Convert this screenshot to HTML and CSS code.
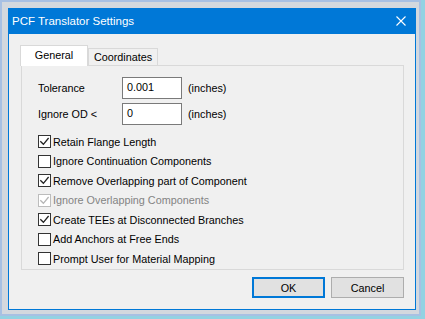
FILE: index.html
```html
<!DOCTYPE html>
<html lang="en">

<head>
	<meta charset="UTF-8">
	<title>PCF Translator Settings</title>

	<link rel="stylesheet" href="styles.css">
</head>

<body>
	<div class="desk">
		<div class="frame">
			<div class="dialog">
				<div class="titlebar">
					<span class="title">PCF Translator Settings</span>
					<svg class="close" width="10" height="10" viewBox="0 0 10 10">
						<path d="M0.5 0.5 L9.5 9.5 M9.5 0.5 L0.5 9.5" stroke="#fff" stroke-width="1.1" fill="none" />
					</svg>
				</div>

				<div class="client">
					<div class="tabs">
						<div class="tab active">General</div>
						<div class="tab">Coordinates</div>
					</div>

					<div class="panel">
						<div class="field">
							<span class="field-label">Tolerance</span>
							<span class="input">0.001</span>
							<span class="unit">(inches)</span>
						</div>
						<div class="field">
							<span class="field-label">Ignore OD &lt;</span>
							<span class="input">0</span>
							<span class="unit">(inches)</span>
						</div>

						<ul class="checks">
							<li class="check"><span class="box"><svg width="11" height="11" viewBox="0 0 11 11"><path d="M1.3 5.2 L4.4 8.3 L9.6 2" /></svg></span>Retain Flange Length</li>
							<li class="check"><span class="box empty"></span>Ignore Continuation Components</li>
							<li class="check"><span class="box"><svg width="11" height="11" viewBox="0 0 11 11"><path d="M1.3 5.2 L4.4 8.3 L9.6 2" /></svg></span>Remove Overlapping part of Component</li>
							<li class="check disabled"><span class="box"><svg width="11" height="11" viewBox="0 0 11 11"><path d="M1.3 5.2 L4.4 8.3 L9.6 2" /></svg></span>Ignore Overlapping Components</li>
							<li class="check"><span class="box"><svg width="11" height="11" viewBox="0 0 11 11"><path d="M1.3 5.2 L4.4 8.3 L9.6 2" /></svg></span>Create TEEs at Disconnected Branches</li>
							<li class="check"><span class="box empty"></span>Add Anchors at Free Ends</li>
							<li class="check"><span class="box empty"></span>Prompt User for Material Mapping</li>
						</ul>
					</div>

					<div class="buttons">
						<button class="btn default">OK</button>
						<button class="btn">Cancel</button>
					</div>
				</div>
			</div>
		</div>
	</div>
</body>

</html>
```

FILE: styles.css
```css
html {
	font-family: "Liberation Sans", Arial, sans-serif;
	font-size: 10.8px;
}

body {
	margin: 0;
	background-color: #93d2e2;
}

/* fondo de escritorio alrededor del dialogo */
.desk {
	width: 421px;
	height: 316px;
	padding: 2px 0 0 2px;
	box-sizing: border-box;
	background-color: #a7c0e3;
}

.frame {
	width: 417px;
	height: 312px;
	padding: 6px 0 0 6px;
	box-sizing: border-box;
	background-color: #d3d8de;
}

.dialog {
	width: 408px;
	height: 302px;
	box-sizing: border-box;
	border: 1px solid #0078d7;
	border-top: 0;
	background-color: #f0f0f0;
	color: #000;
}

.titlebar {
	display: flex;
	align-items: center;
	justify-content: space-between;
	height: 26px;
	background-color: #0078d7;
	color: #fff;
}

.title {
	padding-left: 3px;
	font-size: 11.5px;
}

.close {
	margin-right: 9px;
}

.client {
	padding: 11px 11px 0 11px;
}

.tabs {
	display: flex;
	align-items: flex-end;
	height: 20px;
}

.tab {
	box-sizing: border-box;
	height: 17px;
	width: 70px;
	margin-left: -1px;
	border: 1px solid #d9d9d9;
	border-bottom: 0;
	background-color: #f0f0f0;
	text-align: center;
	line-height: 16px;
}

.tab.active {
	position: relative;
	z-index: 1;
	width: 68px;
	height: 21px;
	margin-left: 0;
	margin-bottom: -1px;
	margin-right: 1px;
	background-color: #fff;
	line-height: 19px;
}

.panel {
	box-sizing: border-box;
	width: 383px;
	height: 205px;
	margin-left: 1px;
	padding: 11px 0 0 16px;
	border: 1px solid #d9d9d9;
	background-color: #f0f0f0;
}

.field {
	display: flex;
	align-items: center;
	height: 22px;
	margin-bottom: 4px;
}

.field-label {
	width: 84px;
}

.input {
	box-sizing: border-box;
	width: 60px;
	height: 22px;
	padding-left: 4px;
	border: 1px solid #7a7a7a;
	background-color: #fff;
	line-height: 19px;
}

.unit {
	margin-left: 6px;
}

.checks {
	margin: 7px 0 0 0;
	padding: 0;
	list-style: none;
}

.check {
	display: flex;
	align-items: center;
	height: 19.5px;
}

.box {
	box-sizing: border-box;
	display: flex;
	align-items: center;
	justify-content: center;
	width: 13px;
	height: 13px;
	margin-right: 2px;
	border: 1px solid #333;
	background-color: #fff;
}

.box path {
	fill: none;
	stroke: #222;
	stroke-width: 1.3;
}

.check.disabled {
	color: #838383;
}

.check.disabled .box {
	border-color: #bcbcbc;
}

.check.disabled .box path {
	stroke: #b5b5b5;
}

.buttons {
	display: flex;
	justify-content: flex-end;
	gap: 6px;
	margin-top: 7px;
}

.btn {
	box-sizing: border-box;
	width: 73px;
	height: 21px;
	padding: 0;
	border: 1px solid #adadad;
	background-color: #e1e1e1;
	font-family: inherit;
	font-size: 10.8px;
	color: #000;
}

.btn.default {
	border: 2px solid #0078d7;
}
```
